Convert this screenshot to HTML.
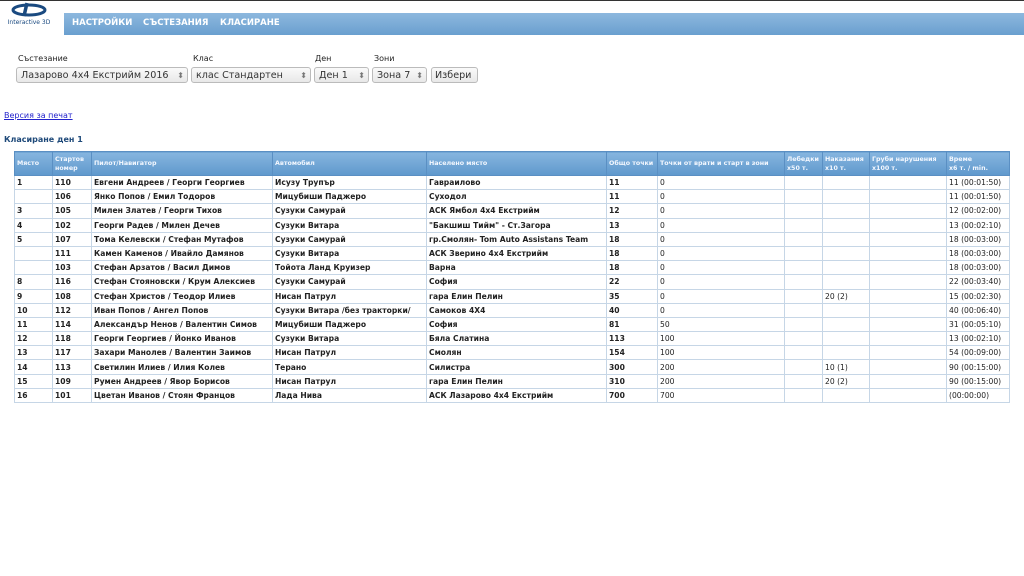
<!DOCTYPE html>
<html><head><meta charset="utf-8"><style>
body{margin:0;width:1024px;height:576px;background:#fff;font-family:"DejaVu Sans","Liberation Sans",sans-serif;position:relative;overflow:hidden}
.top{position:absolute;left:0;top:0;width:1024px;height:1px;background:#333}
.nav{position:absolute;left:64px;top:13px;width:960px;height:22px;background:linear-gradient(#8db8de,#6a9fcf);}
.nav span{position:absolute;top:5px;color:#fff;font-weight:bold;font-size:8.5px}
.logo{position:absolute;left:3px;top:2px;width:52px;font-size:6px;color:#1a4a80;text-align:center}
.lbl{position:absolute;top:54px;font-size:8px;color:#222}
.sel{position:absolute;top:67px;height:16px;border:1px solid #bbb;border-radius:3px;background:linear-gradient(#fafafa,#e8e8e8);font-size:9.6px;line-height:16px;padding-left:4px;box-sizing:border-box;color:#333;white-space:nowrap}
.ar{position:absolute;right:3px;top:0;font-size:8px;color:#777}
a{position:absolute;left:4px;top:111px;font-size:8px;color:#22c}
.h{position:absolute;left:4px;top:135px;font-size:8px;font-weight:bold;color:#1f4a7a}
table{position:absolute;left:14px;top:151px;width:995px;border-collapse:collapse;font-size:7.6px;table-layout:fixed}
th{background:linear-gradient(#86b5df,#5f98cc);color:#f4f8ff;font-weight:bold;text-align:left;height:23px;padding:0 2px;border:1px solid #5a8fc3;font-size:6.3px;line-height:9px}
td{height:13.2px;padding:0 2px;border:1px solid #c6d6e6;color:#222;white-space:nowrap;overflow:hidden}
td.b{font-weight:bold}
</style></head><body>
<div class="top"></div>
<div class="logo"><svg width="46" height="15" viewBox="0 0 46 15"><ellipse cx="23" cy="8" rx="16" ry="5" fill="none" stroke="#1a4a80" stroke-width="3"/><path d="M21 1 L18 14" stroke="#1a4a80" stroke-width="3.5"/></svg><div style="margin-top:0">Interactive 3D</div></div>
<div class="nav"><span style="left:8px">НАСТРОЙКИ</span><span style="left:79px">СЪСТЕЗАНИЯ</span><span style="left:156px">КЛАСИРАНЕ</span></div>
<div class="lbl" style="left:18px">Състезание</div><div class="lbl" style="left:193px">Клас</div><div class="lbl" style="left:315px">Ден</div><div class="lbl" style="left:374px">Зони</div>
<div class="sel" style="left:16px;width:172px">Лазарово 4x4 Екстрийм 2016<span class="ar">⬍</span></div>
<div class="sel" style="left:191px;width:120px">клас Стандартен<span class="ar">⬍</span></div>
<div class="sel" style="left:314px;width:55px">Ден 1<span class="ar">⬍</span></div>
<div class="sel" style="left:372px;width:55px">Зона 7<span class="ar">⬍</span></div>
<div class="sel" style="left:431px;width:47px;padding-left:3px">Избери</div>
<a href="#">Версия за печат</a>
<div class="h">Класиране ден 1</div>
<table>
<colgroup><col style="width:38px"><col style="width:39px"><col style="width:181px"><col style="width:154px"><col style="width:180px"><col style="width:51px"><col style="width:127px"><col style="width:38px"><col style="width:47px"><col style="width:77px"><col style="width:63px"></colgroup>
<tr><th>Място</th><th>Стартов номер</th><th>Пилот/Навигатор</th><th>Автомобил</th><th>Населено място</th><th>Общо точки</th><th>Точки от врати и старт в зони</th><th>Лебедки x50 т.</th><th>Наказания x10 т.</th><th>Груби нарушения x100 т.</th><th>Време<br>x6 т. / min.</th></tr>
<tr><td class=b>1</td><td class=b>110</td><td class=b>Евгени Андреев / Георги Георгиев</td><td class=b>Исузу Трупър</td><td class=b>Гавраилово</td><td class=b>11</td><td>0</td><td></td><td></td><td></td><td>11 (00:01:50)</td></tr>
<tr><td></td><td class=b>106</td><td class=b>Янко Попов / Емил Тодоров</td><td class=b>Мицубиши Паджеро</td><td class=b>Суходол</td><td class=b>11</td><td>0</td><td></td><td></td><td></td><td>11 (00:01:50)</td></tr>
<tr><td class=b>3</td><td class=b>105</td><td class=b>Милен Златев / Георги Тихов</td><td class=b>Сузуки Самурай</td><td class=b>АСК Ямбол 4x4 Екстрийм</td><td class=b>12</td><td>0</td><td></td><td></td><td></td><td>12 (00:02:00)</td></tr>
<tr><td class=b>4</td><td class=b>102</td><td class=b>Георги Радев / Милен Дечев</td><td class=b>Сузуки Витара</td><td class=b>"Бакшиш Тийм" - Ст.Загора</td><td class=b>13</td><td>0</td><td></td><td></td><td></td><td>13 (00:02:10)</td></tr>
<tr><td class=b>5</td><td class=b>107</td><td class=b>Тома Келевски / Стефан Мутафов</td><td class=b>Сузуки Самурай</td><td class=b>гр.Смолян- Tom Auto Assistans Team</td><td class=b>18</td><td>0</td><td></td><td></td><td></td><td>18 (00:03:00)</td></tr>
<tr><td></td><td class=b>111</td><td class=b>Камен Каменов / Ивайло Дамянов</td><td class=b>Сузуки Витара</td><td class=b>АСК Зверино 4x4 Екстрийм</td><td class=b>18</td><td>0</td><td></td><td></td><td></td><td>18 (00:03:00)</td></tr>
<tr><td></td><td class=b>103</td><td class=b>Стефан Арзатов / Васил Димов</td><td class=b>Тойота Ланд Круизер</td><td class=b>Варна</td><td class=b>18</td><td>0</td><td></td><td></td><td></td><td>18 (00:03:00)</td></tr>
<tr><td class=b>8</td><td class=b>116</td><td class=b>Стефан Стояновски / Крум Алексиев</td><td class=b>Сузуки Самурай</td><td class=b>София</td><td class=b>22</td><td>0</td><td></td><td></td><td></td><td>22 (00:03:40)</td></tr>
<tr><td class=b>9</td><td class=b>108</td><td class=b>Стефан Христов / Теодор Илиев</td><td class=b>Нисан Патрул</td><td class=b>гара Елин Пелин</td><td class=b>35</td><td>0</td><td></td><td>20 (2)</td><td></td><td>15 (00:02:30)</td></tr>
<tr><td class=b>10</td><td class=b>112</td><td class=b>Иван Попов / Ангел Попов</td><td class=b>Сузуки Витара /без тракторки/</td><td class=b>Самоков 4X4</td><td class=b>40</td><td>0</td><td></td><td></td><td></td><td>40 (00:06:40)</td></tr>
<tr><td class=b>11</td><td class=b>114</td><td class=b>Александър Ненов / Валентин Симов</td><td class=b>Мицубиши Паджеро</td><td class=b>София</td><td class=b>81</td><td>50</td><td></td><td></td><td></td><td>31 (00:05:10)</td></tr>
<tr><td class=b>12</td><td class=b>118</td><td class=b>Георги Георгиев / Йонко Иванов</td><td class=b>Сузуки Витара</td><td class=b>Бяла Слатина</td><td class=b>113</td><td>100</td><td></td><td></td><td></td><td>13 (00:02:10)</td></tr>
<tr><td class=b>13</td><td class=b>117</td><td class=b>Захари Манолев / Валентин Заимов</td><td class=b>Нисан Патрул</td><td class=b>Смолян</td><td class=b>154</td><td>100</td><td></td><td></td><td></td><td>54 (00:09:00)</td></tr>
<tr><td class=b>14</td><td class=b>113</td><td class=b>Светилин Илиев / Илия Колев</td><td class=b>Терано</td><td class=b>Силистра</td><td class=b>300</td><td>200</td><td></td><td>10 (1)</td><td></td><td>90 (00:15:00)</td></tr>
<tr><td class=b>15</td><td class=b>109</td><td class=b>Румен Андреев / Явор Борисов</td><td class=b>Нисан Патрул</td><td class=b>гара Елин Пелин</td><td class=b>310</td><td>200</td><td></td><td>20 (2)</td><td></td><td>90 (00:15:00)</td></tr>
<tr><td class=b>16</td><td class=b>101</td><td class=b>Цветан Иванов / Стоян Францов</td><td class=b>Лада Нива</td><td class=b>АСК Лазарово 4x4 Екстрийм</td><td class=b>700</td><td>700</td><td></td><td></td><td></td><td>(00:00:00)</td></tr>
</table>
</body></html>
